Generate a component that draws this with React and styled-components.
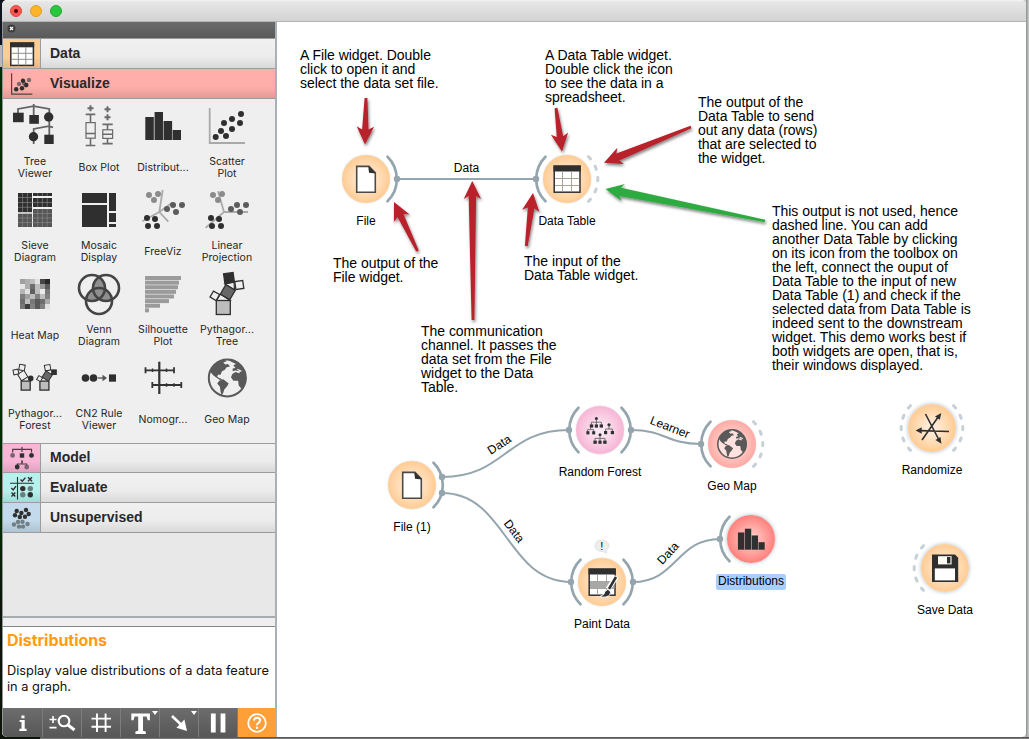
import React from "react";
import styled, { createGlobalStyle, css } from "styled-components";

const Global = createGlobalStyle`
  html, body { margin: 0; padding: 0; height: 100%; overflow: hidden; }
  body { background: #c9cbca; font-family: Inter, Roboto, sans-serif; }
  * { box-sizing: border-box; }
  svg { display: block; }
`;

const INK = "#2f2f2f";
const LINK = "#94a5ae";

/* ---------- window frame ---------- */

const Desktop = styled.div`
  display: flex;
  width: 1029px;
  height: 739px;
  padding: 0 2px 2px 2px;
  overflow: hidden;
  background:
    linear-gradient(#4a4a4a, #8a8888) 40px 737px / 989px 2px no-repeat,
    linear-gradient(90deg, #8c8c8c, #cfd1d0) 1026px 0 / 3px 737px no-repeat,
    linear-gradient(#10151f 0 45px, #b9b9b9 45px 67px, #042c04 67px 520px, #0c140b 600px) 0 0 / 40px 739px no-repeat;
`;

const Window = styled.div`
  display: flex;
  flex-direction: column;
  width: 1024px;
  height: 737px;
  border-radius: 5px 5px 5px 5px;
  overflow: hidden;
  background: #fff;
`;

const TitleBar = styled.div`
  display: flex;
  align-items: center;
  gap: 8px;
  flex: none;
  height: 22px;
  padding-left: 8px;
  border-bottom: 1px solid #b4b4b4;
  background: linear-gradient(#f4f4f4, #e6e6e6 2px, #d3d3d3);
`;

const Light = styled.span`
  display: flex;
  align-items: center;
  justify-content: center;
  width: 12px;
  height: 12px;
  border-radius: 50%;
  border: 1px solid ${(p) => p.$edge};
  background: ${(p) => p.$fill};
  &::after {
    content: "";
    width: 4px;
    height: 4px;
    border-radius: 50%;
    background: ${(p) => (p.$dot ? "#4c0303" : "transparent")};
  }
`;

const Body = styled.div`
  display: flex;
  flex: 1;
  min-height: 0;
`;

/* ---------- sidebar ---------- */

const Sidebar = styled.aside`
  display: flex;
  flex-direction: column;
  flex: none;
  width: 275px;
  border-left: 1px solid #8f9496;
  border-right: 2px solid #aab0b6;
  background: #e8e8e8;
`;

const DockHeader = styled.div`
  display: flex;
  flex: none;
  height: 17px;
  padding: 2px 0 0 4px;
  border-bottom: 1px solid #9c9c9c;
  background: linear-gradient(#6c6c6c, #5a5a5a);
`;

const Tab = styled.div`
  display: flex;
  flex: none;
  height: ${(p) => p.$height || 30}px;
  border-bottom: 1px solid #9a9c9d;
  background: ${(p) =>
    p.$open
      ? "linear-gradient(#ffaea9 60%, #e39b97)"
      : "linear-gradient(#f1f1f1, #ececec 60%, #d9d9d9)"};
`;

const TabIcon = styled.div`
  flex: none;
  width: 38px;
  background: linear-gradient(transparent 60%, rgba(0, 0, 0, 0.1)), ${(p) => p.$color};
  ${(p) =>
    p.$open
      ? css`
          background: none;
        `
      : css`
          border-right: 1px solid #9a9c9d;
        `}
`;

const TabTitle = styled.div`
  padding-left: 9px;
  font: bold 14px/${(p) => p.$line}px "Liberation Sans", Arial, sans-serif;
  color: #282828;
`;

const ToolGrid = styled.div`
  display: grid;
  grid-template-columns: repeat(4, 64px);
  grid-auto-rows: 84px;
  flex: none;
  height: 345px;
  padding-top: 3px;
  border-bottom: 1px solid #9a9c9d;
  background: #efefef;
`;

const Tool = styled.div`
  display: flex;
  flex-direction: column;
  align-items: center;
`;

const ToolLabel = styled.div`
  display: flex;
  align-items: center;
  height: 36px;
  text-align: center;
  white-space: pre;
  font-size: 10.5px;
  line-height: 12px;
  letter-spacing: 0.05px;
  color: #262626;
`;

const Filler = styled.div`
  flex: 1;
`;

const Splitter = styled.div`
  flex: none;
  height: 11px;
  border-top: 2px solid #a6abae;
  border-bottom: 1px solid #858585;
  background: #efefef;
`;

const HelpPanel = styled.div`
  flex: none;
  height: 81px;
  padding: 3px 4px 0;
  background: #fff;
`;

const HelpTitle = styled.div`
  font-size: 16px;
  font-weight: 700;
  line-height: 20px;
  letter-spacing: -0.05px;
  color: #ff9c12;
`;

const HelpText = styled.div`
  margin-top: 13px;
  font-size: 12.8px;
  line-height: 16px;
  white-space: pre;
  color: #111;
`;

const ToolBar = styled.div`
  display: flex;
  flex: none;
  height: 29px;
`;

const ToolButton = styled.div`
  flex: 1;
  border-left: 1px solid ${(p) => (p.$first ? "transparent" : "#7d7d7d")};
  background: ${(p) => (p.$active ? "#ff9f38" : "linear-gradient(#6d6d6d, #575757)")};
`;

/* ---------- canvas ---------- */

const Canvas = styled.main`
  position: relative;
  flex: 1;
  background: #fff;
  font-family: "Liberation Sans", Arial, sans-serif;
  color: #000;
`;

const Overlay = styled.svg`
  position: absolute;
  inset: 0;
`;

const Node = styled.div`
  position: absolute;
  left: ${(p) => p.$x - 277 - 50}px;
  top: ${(p) => p.$y - 22 - 24}px;
  display: flex;
  flex-direction: column;
  align-items: center;
  width: 100px;
`;

const discTones = {
  orange: ["#ffebd6", "#ffcb92"],
  pink: ["#fce6f1", "#f7b3d5"],
  red: ["#ffdedb", "#ffa8a2"],
  hot: ["#ffc4c0", "#ff7f7a"],
};

const Disc = styled.div`
  width: 48px;
  height: 48px;
  border-radius: 50%;
  background: radial-gradient(circle, ${(p) => discTones[p.$tone][0]} 15%, ${(p) => discTones[p.$tone][1]} 72%);
  box-shadow: 0 0 ${(p) => (p.$glow ? 4 : 1.5)}px ${(p) => (p.$glow ? "#a9bccb" : "#b9c6d0")};
`;

const NodeLabel = styled.div`
  margin-top: 11px;
  padding: 0 2px 2px;
  border-radius: 2px;
  font-size: 12px;
  line-height: 14px;
  white-space: nowrap;
  background: ${(p) => (p.$selected ? "#a8cfff" : "transparent")};
`;

const Note = styled.div`
  position: absolute;
  left: ${(p) => p.$x - 277}px;
  top: ${(p) => p.$y - 22}px;
  font-size: 14px;
  line-height: 14px;
  letter-spacing: -0.03px;
  white-space: pre;
`;

/* ---------- shared drawings ---------- */

const Dots = ({ points, r = 3, fill = INK }) =>
  points.map(([x, y], i) => <circle key={i} cx={x} cy={y} r={r} fill={fill} />);

const Globe = ({ cx, cy, r, sea }) => (
  <g transform={`translate(${cx} ${cy}) scale(${r / 58})`}>
    <circle r="55" fill={sea} stroke="#595959" strokeWidth="6" />
    <g fill="#595959">
      <path d="M-50-18L-44-34L-28-48L-10-55L-2-50L-12-46L-6-40L2-42L8-34L-2-32L-8-24L-16-20L-20-10L-28-10L-30-4L-24 0L-18 2L-14 8L-22 6L-34-2L-42-8Z" />
      <path d="M-24 8L-12 4L4 16L-1 25L-9 34L-12 44L-17 52L-20 40L-22 26L-30 16Z" />
      <path d="M-2-56L20-54L34-46L46-32L55-14L57 4L50 26L42 32L34 22L32 8L18 8L11-2L15-12L24-18L36-14L38-20L24-22L16-20L16-28L24-30L18-38L26-42L12-48Z" />
    </g>
    <path d="M30-26L42-20M16-34L10-38" stroke={sea} strokeWidth="4" />
  </g>
);

const FileGlyph = () => (
  <g>
    <path d="M14.7 11.4H27L33.3 17.8V37.2H14.7Z" fill="#fff" stroke="#4a4a48" strokeWidth="1.6" />
    <path d="M26.2 11L34 18.6L27 17.8Z" fill={INK} />
  </g>
);

const TableGlyph = () => (
  <g>
    <rect x="11.2" y="11.2" width="25.8" height="26" fill="#fff" stroke={INK} strokeWidth="1.5" />
    <rect x="10.5" y="10.5" width="27.3" height="6" fill={INK} />
    <path d="M19.5 17V37M28.5 17V37M12 23.5H36.5M12 30.5H36.5" stroke="#a2978c" strokeWidth="0.9" />
  </g>
);

const Bars = ({ dx = 0, dy = 0, k = 1 }) => (
  <g transform={`translate(${dx} ${dy}) scale(${k})`} fill={INK}>
    <rect x="6.3" y="15" width="8.6" height="23" />
    <rect x="15.6" y="10" width="8.4" height="28" />
    <rect x="24.7" y="19" width="8.4" height="19" />
    <rect x="33.7" y="28" width="8.3" height="10" />
    <path d="M15.2 15V38M24.4 19V38M33.4 28V38" stroke="#888" strokeWidth="0.7" />
  </g>
);

const MiniTree = ({ x, y }) => (
  <g transform={`translate(${x} ${y})`} fill={INK} stroke="none">
    <circle cx="0" cy="0" r="1.5" />
    <path d="M0 1V6M-5 6V3.6H5V6" stroke="#555" strokeWidth="0.8" fill="none" />
    <rect x="-6.6" y="5.8" width="3.4" height="3.2" />
    <rect x="3.2" y="5.8" width="3.4" height="3.2" />
  </g>
);

const nodeGlyphs = {
  file: <FileGlyph />,
  table: <TableGlyph />,
  forest: (
    <g>
      <MiniTree x="20.4" y="12.6" />
      <rect x="18.8" y="18.4" width="3.2" height="3.2" fill={INK} />
      <path d="M14.6 20.8V23M11.6 26V23.6H17.6V26" stroke="#555" strokeWidth="0.8" fill="none" />
      <rect x="10.4" y="25.2" width="3" height="3.2" fill={INK} />
      <rect x="16.2" y="25.2" width="3" height="3.2" fill={INK} />
      <circle cx="33" cy="18.8" r="1.6" fill={INK} />
      <path d="M33 19V23M29.6 26V23H36.4V26" stroke="#555" strokeWidth="0.8" fill="none" />
      <rect x="28" y="25" width="3.2" height="3.2" fill={INK} />
      <rect x="34.8" y="25" width="3.2" height="3.2" fill={INK} />
      <MiniTree x="24" y="28.8" />
      <rect x="22.4" y="34.6" width="3.2" height="3.2" fill={INK} />
    </g>
  ),
  globe: <Globe cx={24} cy={24} r={15} sea="#ffe1df" />,
  bars: <Bars dx={6.2} dy={6.2} k={0.75} />,
  paint: (
    <g>
      <TableGlyph />
      <rect x="12" y="23.5" width="24.5" height="7" fill="#a8a8a8" />
      <path d="M38.5 18.5L30 31" stroke="#fff" strokeWidth="5" />
      <path d="M22 38.5Q27 37 26.8 33.5Q30 30 32 32.5Q34 37 28 39Q24.5 39.6 22 38.5Z" fill={INK} stroke="#fff" strokeWidth="1" />
      <path d="M38 19L31 30.8" stroke={INK} strokeWidth="2.6" />
    </g>
  ),
  random: (
    <g stroke={INK} strokeWidth="1.6" fill={INK}>
      <path d="M14 36L30.5 12.5M17.5 10L31 36M41 27.5L12 26.6" />
      <path d="M33.3 9L31.8 15.8L27 12.5Z" stroke="none" />
      <path d="M33.4 39.8L27.4 36L32.5 33Z" stroke="none" />
      <path d="M7.6 26.5L13.7 23.3V29.8Z" stroke="none" />
    </g>
  ),
  save: (
    <g>
      <path d="M11 10.5H34L37.2 13.7V38H11Z" fill={INK} />
      <rect x="17" y="12.2" width="13.6" height="8.2" fill="#fbfbf4" />
      <rect x="26" y="13" width="3.4" height="6.4" fill={INK} />
      <rect x="13.8" y="24.4" width="20.2" height="12" fill="#fff" />
    </g>
  ),
};

/* ---------- toolbox icons ---------- */

const heat = [
  [160, 175, 190, 225, 70, 40],
  [230, 175, 110, 190, 150, 90],
  [180, 225, 95, 190, 235, 120],
  [125, 160, 190, 130, 190, 130],
  [110, 190, 120, 90, 110, 170],
  [120, 60, 130, 90, 130, 225],
];

const Sq = ({ x, y, s, a = 0, fill = "#efefef", w = 1.3 }) => (
  <rect
    x={-s / 2}
    y={-s / 2}
    width={s}
    height={s}
    transform={`translate(${x} ${y}) rotate(${a})`}
    fill={fill}
    stroke={INK}
    strokeWidth={w}
  />
);

const Projection = ({ rays }) => (
  <g>
    <path d={rays} stroke="#ababab" strokeWidth="1.8" fill="none" />
    <Dots fill="#8b8b8b" points={[[10, 9], [19, 8], [15, 14]]} />
    <Dots fill="#5c5c5c" points={[[28, 23], [34, 19], [43, 19], [37, 26]]} />
    <Dots points={[[8, 32], [16, 33], [9, 40], [18, 40]]} />
  </g>
);

const Plus = ({ x, y }) => <path d={`M${x - 3} ${y}H${x + 3}M${x} ${y - 3}V${y + 3}`} strokeWidth="2" />;

const tools = [
  {
    label: "Tree\nViewer",
    icon: (
      <g fill={INK}>
        <path
          d="M7 12V6.9L22.7 4.2L38.3 6.9V12M22.7 2V14M38.3 18V33M22.7 42V26.9L37.7 24.2L42 25.4"
          fill="none"
          stroke="#636363"
          strokeWidth="1.8"
        />
        <rect x="2" y="10.7" width="10.7" height="9.5" />
        <rect x="18.3" y="13" width="9.6" height="8.8" />
        <circle cx="37.7" cy="15" r="4.7" />
        <circle cx="22.5" cy="34.7" r="4.7" />
        <rect x="33.3" y="32.7" width="9.4" height="9.3" />
      </g>
    ),
  },
  {
    label: "Box Plot",
    icon: (
      <g fill="none" stroke="#6a6a6a" strokeWidth="1.6">
        <Plus x={15.5} y={6.3} />
        <Plus x={32.5} y={7.3} />
        <Plus x={32.5} y={15.3} />
        <path d="M10.7 12.4H20.3M15.5 12.4V20.3M15.5 36.4V43.5M10.7 43.5H20.3M10.7 31.5H20.3" />
        <rect x="11" y="20.6" width="9.2" height="15.6" strokeWidth="1.2" />
        <path d="M27.5 22.4H37.7M32.5 22.4V27.7M32.5 36.4V41.6M27.5 41.6H37.7M27.5 32.2H37.7" />
        <rect x="27.8" y="27.8" width="9.8" height="8.6" strokeWidth="1.2" />
      </g>
    ),
  },
  { label: "Distribut...", icon: <Bars /> },
  {
    label: "Scatter\nPlot",
    icon: (
      <g>
        <path d="M6.7 6V41H42" fill="none" stroke="#a9a9a9" strokeWidth="1.8" />
        <Dots points={[[12.7, 35], [18, 29], [23, 34], [21, 21], [29, 27], [29, 17], [37, 21], [38, 12]]} />
      </g>
    ),
  },
  {
    label: "Sieve\nDiagram",
    icon: (
      <g fill={INK}>
        <rect x="7" y="7" width="14" height="19.2" />
        <rect x="22" y="7" width="19" height="3" />
        <rect x="22" y="12" width="19" height="9" />
        <rect x="7" y="27.7" width="14" height="13.3" fill="#565656" />
        <rect x="22" y="23" width="19" height="18" fill="#565656" />
        <path
          d="M11.6 7V26M16.4 7V26M11.6 28V41M16.4 28V41M26.7 7V10M31.4 7V10M36.2 7V10M26.7 12V21M31.4 12V21M36.2 12V21M26.7 23V41M31.4 23V41M36.2 23V41M7 11.5H21M7 16.5H41M7 21.3H21M7 32H41M7 36.6H41M22 27.5H41"
          stroke="#8d8d8d"
          strokeWidth="0.6"
        />
      </g>
    ),
  },
  {
    label: "Mosaic\nDisplay",
    icon: (
      <g fill={INK}>
        <rect x="7" y="7" width="25" height="10" />
        <rect x="7" y="19" width="25" height="22" />
        <rect x="34" y="7" width="7" height="18" />
        <rect x="34" y="27" width="7" height="9" />
        <rect x="34" y="38" width="7" height="3" />
      </g>
    ),
  },
  { label: "FreeViz", icon: <Projection rays="M3.3 35.3L20.3 26L23.7 4M29.3 35.7L20.3 26L32.7 17" /> },
  { label: "Linear\nProjection", icon: <Projection rays="M2.7 41.7L21 26L15 5.3M21 26H45" /> },
  {
    label: "Heat Map",
    icon: heat.flatMap((row, j) =>
      row.map((v, i) => (
        <rect key={`${i}-${j}`} x={9 + i * 5} y={9 + j * 5} width="5" height="5" fill={`rgb(${v},${v},${v})`} />
      ))
    ),
  },
  {
    label: "Venn\nDiagram",
    icon: (
      <g>
        <clipPath id="vennA"><circle cx="17" cy="18" r="13" /></clipPath>
        <clipPath id="vennB"><circle cx="31" cy="18" r="13" /></clipPath>
        <g fill="#8f8f8f">
          <circle cx="31" cy="18" r="13" clipPath="url(#vennA)" />
          <circle cx="24" cy="31" r="13" clipPath="url(#vennA)" />
          <circle cx="24" cy="31" r="13" clipPath="url(#vennB)" />
        </g>
        <g fill="none" stroke="#444" strokeWidth="2.6">
          <circle cx="17" cy="18" r="13" />
          <circle cx="31" cy="18" r="13" />
          <circle cx="24" cy="31" r="13" />
        </g>
      </g>
    ),
  },
  {
    label: "Silhouette\nPlot",
    icon: [36, 34, 33, 31, 29, 24, 15, 4].map((w, i) => (
      <rect key={i} x="6" y={6 + i * 4.62} width={w} height="4" fill="#9b9b9b" />
    )),
  },
  {
    label: "Pythagor...\nTree",
    icon: (
      <g>
        <path d="M13.5 30.5L17.5 24L27 30.5Z" fill="none" stroke={INK} strokeWidth="1.2" />
        <path d="M22 14L31 12L31.5 20Z" fill="none" stroke={INK} strokeWidth="1.2" />
        <Sq x={20.3} y={37.5} s={14} fill="#bdbdbd" />
        <Sq x={24.8} y={22.2} s={11} a={30} fill="#676767" />
        <Sq x={26} y={8} s={9.6} a={-8} fill={INK} />
        <Sq x={36.3} y={15} s={8} a={-8} />
        <Sq x={11.8} y={25.8} s={7} a={30} />
      </g>
    ),
  },
  {
    label: "Pythagor...\nForest",
    icon: (
      <g>
        <Sq x={14.7} y={31.6} s={9} fill="#bdbdbd" />
        <Sq x={11.7} y={21.6} s={7.5} a={-32} w={1} />
        <Sq x={4.9} y={18} s={5} a={-12} w={1} />
        <Sq x={11} y={13.5} s={5.6} a={10} w={1} />
        <circle cx="19.7" cy="24.4" r="2.8" fill={INK} />
        <Sq x={33.4} y={31.6} s={9} fill="#bdbdbd" />
        <Sq x={28.6} y={24.6} s={4.4} a={32} w={1} />
        <Sq x={36.2} y={22} s={7.5} a={32} fill="#676767" w={1} />
        <Sq x={36.6} y={13.7} s={5.6} a={-10} w={1} />
        <Sq x={43} y={18.2} s={4.6} a={0} fill={INK} w={1} />
      </g>
    ),
  },
  {
    label: "CN2 Rule\nViewer",
    icon: (
      <g fill={INK}>
        <Dots r={3.8} points={[[10.5, 24], [18.5, 24]]} />
        <path d="M22.7 24H28" stroke="#666" strokeWidth="1.5" />
        <path d="M27.5 20.8L32 24L27.5 27.2Z" fill="#555" />
        <rect x="34" y="20.4" width="7" height="7.3" />
      </g>
    ),
  },
  {
    label: "Nomogr...",
    icon: (
      <g fill="none" stroke="#333" strokeWidth="1.8">
        <path d="M20.3 7.7V40" strokeWidth="2.2" />
        <path d="M6.5 16.3H35M6.5 13.3V19.3M35 13.3V19.3M13.3 31H42.3M13.3 28V34M42.3 28V34" />
        <path d="M13.5 14.6V18M27.5 14.6V18M27.5 29.3V32.7M35 29.3V32.7" strokeWidth="1.5" />
      </g>
    ),
  },
  { label: "Geo Map", icon: <Globe cx={24.3} cy={24} r={19.5} sea="#efefef" /> },
];

const tabs = {
  data: (
    <g>
      <rect x="7.8" y="4.2" width="22.6" height="22.2" fill="#fff" stroke={INK} strokeWidth="1.5" />
      <rect x="7" y="3.3" width="24.2" height="5" fill={INK} />
      <path d="M15.3 8V26.5M22.8 8V26.5M8.5 14.3H30M8.5 20.3H30" stroke="#8c8c8c" strokeWidth="1" />
    </g>
  ),
  visualize: (
    <g>
      <path d="M8.6 4.3V25.2H29.3" fill="none" stroke="#54423f" strokeWidth="1.2" />
      <Dots r={2.2} fill="#7b6a69" points={[[16, 15], [22.7, 16.3], [21, 14.3], [26, 11]]} />
      <Dots r={2.2} points={[[13.2, 20.2], [19, 19.2], [20, 11.8], [23.3, 16]]} />
    </g>
  ),
  model: (
    <g>
      <path d="M9.7 8.5V5.4H28.5V8.5M19 3V8M19 17V20M14.4 22V20H23.6V22" fill="none" stroke="#4c3a44" strokeWidth="1.2" />
      <Dots r={2.4} fill="#7b6472" points={[[9.6, 11.4], [23.7, 23]]} />
      <Dots r={2.4} points={[[28.5, 11.4], [14.2, 23]]} />
      <rect x="16.8" y="9.3" width="4.4" height="4.4" fill={INK} />
      <path d="M19 16V19" stroke="#4c3a44" strokeWidth="1" />
    </g>
  ),
  evaluate: (
    <g fill="none" stroke={INK} strokeWidth="1.4">
      <path d="M14.5 4V26.5M7 10.3H31" strokeWidth="1.1" />
      <path d="M17.5 6.5L19.3 8.3L22.4 4.6M8.3 15L10.2 17L13 13.2M25 4.3L29 8.3M29 4.3L25 8.3M8.5 19.6L12.3 23.6M12.3 19.6L8.5 23.6" />
      <g stroke="none">
        <Dots r={2.7} points={[[19.8, 15.6], [27.3, 21.8]]} />
        <Dots r={2.7} fill="#67807e" points={[[27.3, 15.6], [19.8, 21.8]]} />
      </g>
    </g>
  ),
  unsupervised: (
    <g>
      <Dots r={2.2} fill="#727d84" points={[[11, 21.5], [15, 19], [19.5, 18.8], [16, 23.6], [20, 23.6], [24.5, 21]]} />
      <Dots r={2.2} points={[[13.7, 8], [23, 7], [12, 12.3], [18.4, 10], [25.7, 11], [16.8, 14], [22, 13.8]]} />
    </g>
  ),
};

const CategoryTab = ({ id, title, color, open, height = 30 }) => (
  <Tab $open={open} $height={height}>
    <TabIcon $color={color} $open={open}>
      <svg width="37" height={height - 1}>{tabs[id]}</svg>
    </TabIcon>
    <TabTitle $line={height === 30 ? 28 : 26}>{title}</TabTitle>
  </Tab>
);

const bar = (children) => (
  <svg width="38" height="29" fill="none" stroke="#fff">
    {children}
  </svg>
);

const toolbarIcons = [
  bar(
    <g>
      <path d="M15.6 13H19.3V21.6M15.4 21.9H22.6" strokeWidth="2.2" />
      <path d="M19 12V22" strokeWidth="3" />
      <path d="M17.4 8.9H20.5" strokeWidth="2.8" />
    </g>
  ),
  bar(
    <g>
      <path d="M6.5 11.5H13.5M10 8V15M6.5 19.6H13.5" strokeWidth="1.6" />
      <circle cx="21" cy="13" r="5.3" strokeWidth="2.1" />
      <path d="M25 17L31.5 22" strokeWidth="3" />
    </g>
  ),
  bar(<path d="M15 5.5V24M23.6 5.5V24M9.5 10.6H29M9.5 18.8H29" strokeWidth="1.9" />),
  bar(
    <g fill="#fff" stroke="none">
      <path d="M10.3 5.6H28.9V12.2H26.7L25.6 8.6H22V22.8L24.8 23.6V26H14.4V23.6L17.2 22.8V8.6H13.6L12.5 12.2H10.3Z" />
      <path d="M31 3H37L34 7Z" />
    </g>
  ),
  bar(
    <g>
      <path d="M12 8L22 17.5" strokeWidth="2.6" />
      <path d="M27 23L16.4 19.8L24.4 11.4Z" fill="#fff" stroke="none" />
      <path d="M31 3H37L34 7Z" fill="#fff" stroke="none" />
    </g>
  ),
  bar(<path d="M14.3 5.5V24.5M24 5.5V24.5" strokeWidth="4.8" />),
  bar(
    <g>
      <circle cx="19" cy="15" r="8.8" strokeWidth="1.8" />
      <path d="M15.9 12.6Q16 9.8 19.2 9.8Q22.2 9.9 22.2 12.4Q22.2 13.8 20.4 14.9Q19 15.7 19 17.2" strokeWidth="1.9" />
      <circle cx="19" cy="19.8" r="1.2" fill="#fff" stroke="none" />
    </g>
  ),
];

/* ---------- workflow data ---------- */

const nodes = [
  { x: 366, y: 179, label: "File", tone: "orange", glyph: "file", right: "solid" },
  { x: 567, y: 179, label: "Data Table", tone: "orange", glyph: "table", left: "solid", right: "dash" },
  { x: 412, y: 485, label: "File (1)", tone: "orange", glyph: "file", right: "solid" },
  { x: 600, y: 430, label: "Random Forest", tone: "pink", glyph: "forest", left: "solid", right: "solid" },
  { x: 732, y: 444, label: "Geo Map", tone: "red", glyph: "globe", left: "solid", right: "dash" },
  { x: 602, y: 582, label: "Paint Data", tone: "orange", glyph: "paint", left: "solid", right: "solid" },
  { x: 751, y: 539, label: "Distributions", tone: "hot", glyph: "bars", left: "solid", selected: true, glow: true },
  { x: 932, y: 428, label: "Randomize", tone: "orange", glyph: "random", left: "dash", right: "dash", glow: true },
  { x: 945, y: 568, label: "Save Data", tone: "orange", glyph: "save", left: "dash", glow: true },
];

const Anchor = ({ x, y, side, kind }) => {
  const s = side === "left" ? -1 : 1;
  return (
    <path
      d={`M${x + s * 21.5} ${y - 22.3}A31.4 31.4 0 0 ${s > 0 ? 1 : 0} ${x + s * 21.5} ${y + 22.3}`}
      fill="none"
      stroke={kind === "dash" ? "#c6d0d6" : LINK}
      strokeWidth={kind === "dash" ? 3 : 2.7}
      strokeLinecap="round"
      strokeDasharray={kind === "dash" ? "3.2 8.4" : undefined}
    />
  );
};

const links = [
  [398, 179, 536, 179],
  [442, 477, 569, 430],
  [442, 493, 571, 582],
  [631, 430, 701, 444],
  [633, 582, 720, 539],
];

const linkLabels = [
  { x: 466.5, y: 172, a: 0, text: "Data" },
  { x: 501.5, y: 448, a: -33, text: "Data" },
  { x: 511, y: 533.5, a: 53, text: "Data" },
  { x: 668.5, y: 431, a: 21, text: "Learner" },
  { x: 671, y: 556, a: -47, text: "Data" },
];

const arrows = [
  [366, 98, 365, 144.5, 6.4],
  [556, 108, 562, 151.5, 6.4],
  [417.5, 251, 394, 202, 6.6],
  [473, 320, 472.3, 181, 7.4],
  [526.3, 246, 533, 193, 6.6],
  [691, 127, 604, 162.7, 7.8],
  [765, 221, 605.5, 189, 8.4, "#2fab41"],
];

const Arrow = ({ from, to, w, color = "#b8202c" }) => {
  const dx = to[0] - from[0];
  const dy = to[1] - from[1];
  const n = Math.hypot(dx, dy);
  const angle = (Math.atan2(dy, dx) * 180) / Math.PI;
  return (
    <g filter="url(#arrowShadow)">
      <path
        transform={`translate(${from[0]} ${from[1]}) rotate(${angle})`}
        d={`M0-1.4L${n - 15}${-w / 2}L${n - 18}-8.7L${n} 0L${n - 18} 8.7L${n - 15} ${w / 2}L0 1.4Z`}
        fill={color}
      />
    </g>
  );
};

const notes = [
  [300, 48, "A File widget. Double\nclick to open it and\nselect the data set file."],
  [545, 48, "A Data Table widget.\nDouble click the icon\nto see the data in a\nspreadsheet."],
  [698, 95, "The output of the\nData Table to send\nout any data (rows)\nthat are selected to\nthe widget."],
  [333, 256, "The output of the\nFile widget."],
  [524, 254, "The input of the\nData Table widget."],
  [421, 324, "The communication\nchannel. It passes the\ndata set from the File\nwidget to the Data\nTable."],
  [
    772,
    204,
    "This output is not used, hence\ndashed line. You can add\nanother Data Table by clicking\non its icon from the toolbox on\nthe left, connect the ouput of\nData Table to the input of new\nData Table (1) and check if the\nselected data from Data Table is\nindeed sent to the downstream\nwidget. This demo works best if\nboth widgets are open, that is,\ntheir windows displayed.",
  ],
];

export default function App() {
  return (
    <Desktop>
      <Global />
      <Window>
        <TitleBar>
          <Light $fill="#fc5650" $edge="#e0443e" $dot />
          <Light $fill="#fdb42b" $edge="#dfa023" />
          <Light $fill="#29c73e" $edge="#1faa2f" />
        </TitleBar>
        <Body>
          <Sidebar>
            <DockHeader>
              <svg width="9" height="9">
                <circle cx="4.5" cy="4.5" r="4" fill="#3d3d3d" />
                <path d="M3 3L6 6M6 3L3 6" stroke="#fff" strokeWidth="1.3" />
              </svg>
            </DockHeader>
            <CategoryTab id="data" title="Data" color="#ffcc94" />
            <CategoryTab id="visualize" title="Visualize" open />
            <ToolGrid>
              {tools.map((t) => (
                <Tool key={t.label}>
                  <svg width="48" height="48">{t.icon}</svg>
                  <ToolLabel>{t.label}</ToolLabel>
                </Tool>
              ))}
            </ToolGrid>
            <CategoryTab id="model" title="Model" color="#f9b5d6" height={29} />
            <CategoryTab id="evaluate" title="Evaluate" color="#b5f2ee" />
            <CategoryTab id="unsupervised" title="Unsupervised" color="#c2daeb" />
            <Filler />
            <Splitter />
            <HelpPanel>
              <HelpTitle>Distributions</HelpTitle>
              <HelpText>{"Display value distributions of a data feature\nin a graph."}</HelpText>
            </HelpPanel>
            <ToolBar>
              {toolbarIcons.map((icon, i) => (
                <ToolButton key={i} $first={i === 0} $active={i === 6}>
                  {icon}
                </ToolButton>
              ))}
            </ToolBar>
          </Sidebar>
          <Canvas>
            <Overlay width="749" height="715" viewBox="277 22 749 715">
              <defs>
                <filter id="arrowShadow" x="-50%" y="-50%" width="200%" height="200%">
                  <feDropShadow dx="1" dy="2" stdDeviation="1.5" floodOpacity="0.5" />
                </filter>
              </defs>
              {links.map(([x1, y1, x2, y2]) => {
                const c = (x2 - x1) / 2;
                return (
                  <g key={`${x1}-${y1}`}>
                    <path
                      d={`M${x1} ${y1}C${x1 + c} ${y1} ${x2 - c} ${y2} ${x2} ${y2}`}
                      fill="none"
                      stroke={LINK}
                      strokeWidth="2"
                    />
                    <Dots r={3.2} fill={LINK} points={[[x1 - (x1 === 398 ? 1 : 0), y1], [x2, y2]]} />
                  </g>
                );
              })}
              {nodes.map((n) => (
                <g key={n.label}>
                  {n.left && <Anchor x={n.x} y={n.y} side="left" kind={n.left} />}
                  {n.right && <Anchor x={n.x} y={n.y} side="right" kind={n.right} />}
                </g>
              ))}
              {linkLabels.map((l) => (
                <text
                  key={`${l.x}`}
                  transform={`translate(${l.x} ${l.y}) rotate(${l.a})`}
                  textAnchor="middle"
                  fontSize="12"
                >
                  {l.text}
                </text>
              ))}
              <path
                d="M601.8 540Q609 540.3 609 546Q608.6 549 606 550.6L607 553.3L603 551.6Q595 551.6 594.7 546Q595 540.2 601.8 540Z"
                fill="#ededed"
                stroke="#dadada"
                strokeWidth="0.6"
              />
              <text x="601.8" y="550" textAnchor="middle" fontSize="11">!</text>
            </Overlay>
            {nodes.map((n) => (
              <Node key={n.label} $x={n.x} $y={n.y}>
                <Disc $tone={n.tone} $glow={n.glow}>
                  <svg width="48" height="48">{nodeGlyphs[n.glyph]}</svg>
                </Disc>
                <NodeLabel $selected={n.selected}>{n.label}</NodeLabel>
              </Node>
            ))}
            {notes.map(([x, y, text]) => (
              <Note key={`${x}-${y}`} $x={x} $y={y}>
                {text}
              </Note>
            ))}
            <Overlay width="749" height="715" viewBox="277 22 749 715">
              {arrows.map(([x1, y1, x2, y2, w, color]) => (
                <Arrow key={`${x1}-${y1}`} from={[x1, y1]} to={[x2, y2]} w={w} color={color} />
              ))}
            </Overlay>
          </Canvas>
        </Body>
      </Window>
    </Desktop>
  );
}
